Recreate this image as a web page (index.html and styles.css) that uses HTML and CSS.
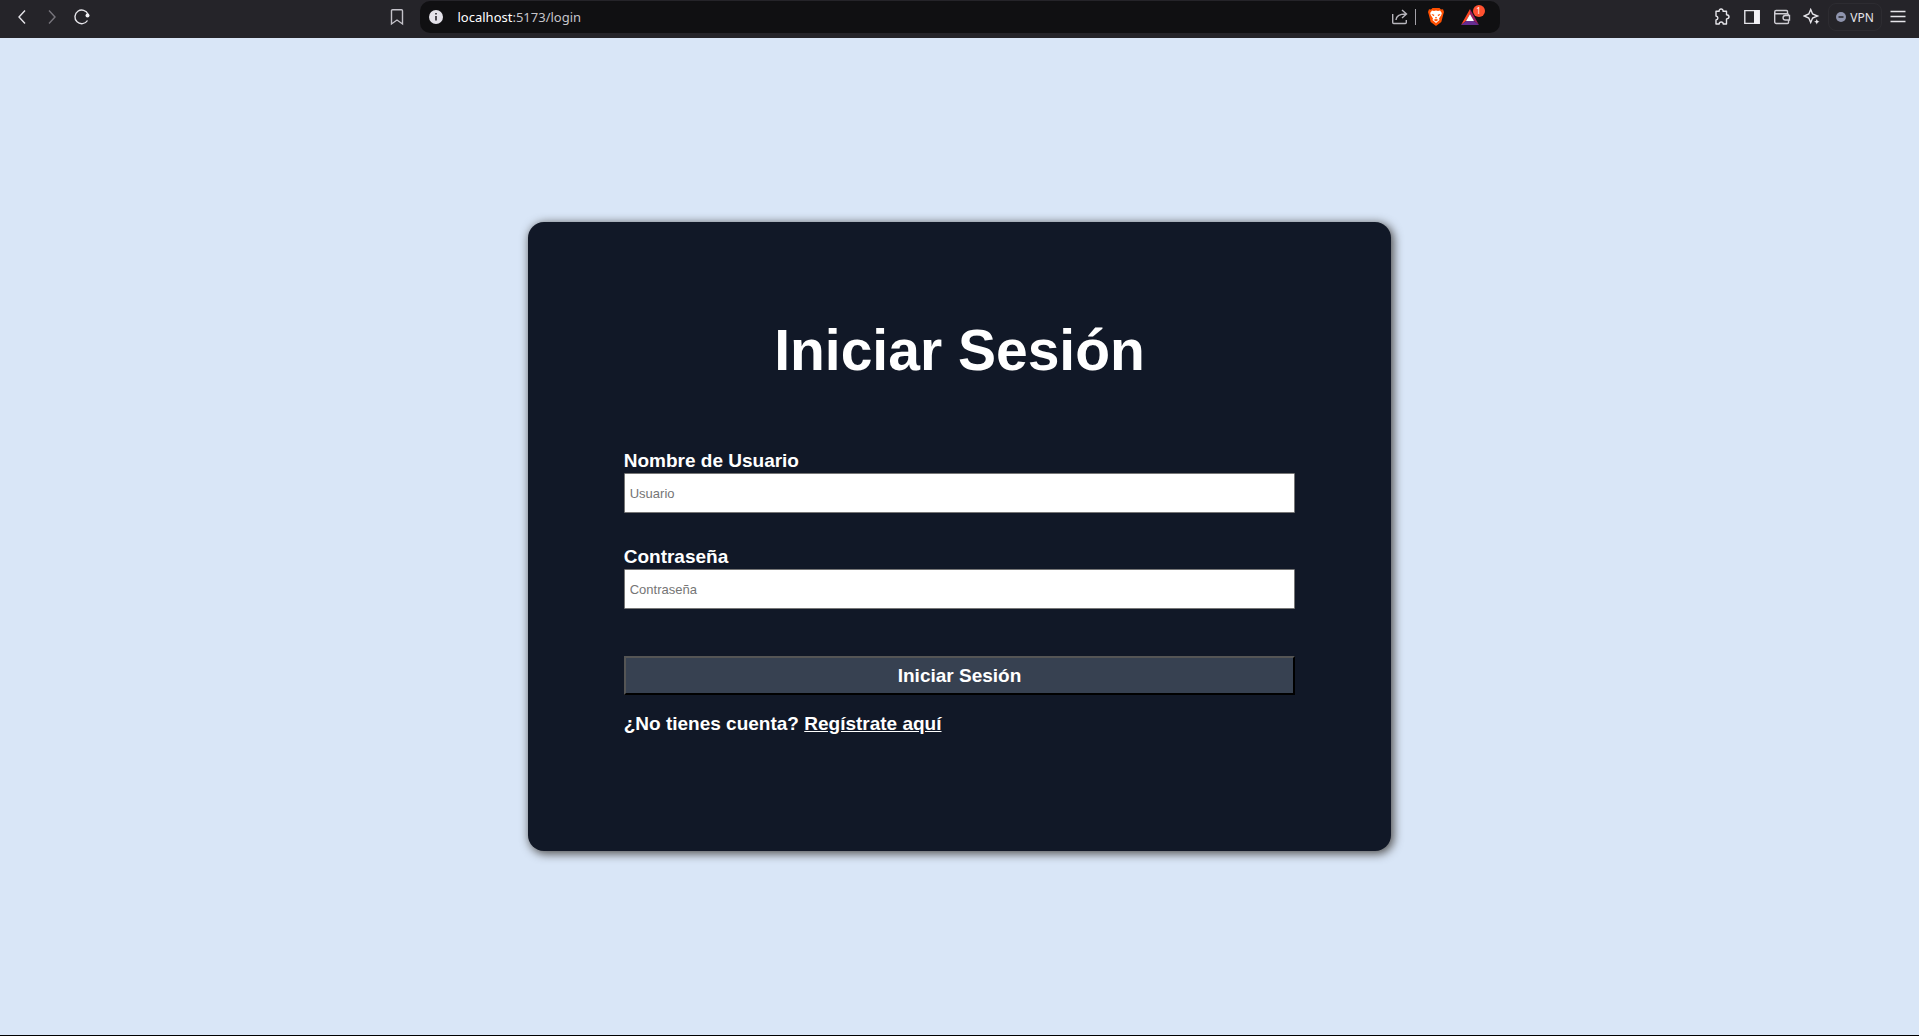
FILE: index.html
```html
<!DOCTYPE html>
<html lang="es">
<head>
<meta charset="utf-8">
<meta name="viewport" content="width=device-width, initial-scale=1">
<title>Iniciar Sesión</title>
<link rel="stylesheet" href="styles.css">
</head>
<body>
<header class="toolbar">
  <nav class="toolbar-side toolbar-left" aria-label="Navegación">
    <button class="icon-button" type="button" aria-label="Atrás"><svg width="16" height="16" viewBox="0 0 16 16"><path d="M11 1.500 5 8l6 6.500"/></svg></button>
    <button class="icon-button dim" type="button" aria-label="Adelante"><svg width="16" height="16" viewBox="0 0 16 16"><path d="M5 1.500l6 6.500-6 6.500"/></svg></button>
    <button class="icon-button" type="button" aria-label="Recargar"><svg width="18" height="18" viewBox="0 0 18 18"><path d="M14.500 12.500A6.800 6.800 0 1 1 15 6.200"/><circle class="solid" cx="14.500" cy="7.500" r="2"/></svg></button>
    <button class="icon-button bookmark" type="button" aria-label="Marcador"><svg width="16" height="18" viewBox="0 0 16 18"><path d="M3.500 1.700h9a1 1 0 0 1 1 1V16L8 12 2.500 16V2.700a1 1 0 0 1 1-1z"/></svg></button>
  </nav>
  <div class="address-bar">
    <button class="plain" type="button" aria-label="Información del sitio"><svg width="16" height="16" viewBox="0 0 16 16"><circle cx="8" cy="8" r="7" fill="#e4e2e9"/><path d="M8 7v4.500M8 4v1.600" fill="none" stroke="#3a383f" stroke-width="1.800"/></svg></button>
    <div class="address" role="textbox" contenteditable="true" spellcheck="false" aria-label="Dirección"><span class="host">localhost</span>:5173/login</div>
    <button class="icon-button" type="button" aria-label="Compartir"><svg class="muted" width="18" height="18" viewBox="0 0 18 18"><path d="M1.700 6v8.500a1 1 0 0 0 1 1h11.600a1 1 0 0 0 1-1V12M5 12c.3-4 3.200-6 9.500-6M11 2l4.500 4-4.500 4"/></svg></button>
    <span class="divider"></span>
    <button class="icon-button shield" type="button" aria-label="Escudos"><svg width="18" height="20" viewBox="0 0 18 20"><path d="M5.500 1h7l1.500 1.500 2-.2L17 5l-.6 2L14.300 15 9 19 3.700 15 1.600 7 1 5l1-2.700 2 .2z" fill="#ff5000"/><path d="M5 3.500l2 .4 2-.4 2 .4 2-.4 1.800 2.500-.5 2-2.300 3.500.5 1.500L9 16l-3.500-3 .5-1.500L3.700 8l-.5-2z" fill="#fff"/><path d="M4.600 7l2.700.8-.3 1.400L5 8zM13.400 7l-2.700.8.3 1.400L13 8zM8 10h2l-1 2zM6.500 12.800 9 12l2.500.8L9 14.400z" fill="#ff5000"/></svg></button>
    <button class="icon-button rewards" type="button" aria-label="Recompensas"><svg width="18" height="16" viewBox="0 0 18 16"><path d="M9 0 0 16l5-4L9 5z" fill="#ff4724"/><path d="M9 0l9 16-5-4L9 5z" fill="#9e1f63"/><path d="M0 16h18l-5-4H5z" fill="#662d91"/><path d="M9 5l4 7H5z" fill="#fff"/></svg><span class="badge">1</span></button>
  </div>
  <div class="toolbar-side toolbar-right">
    <button class="icon-button" type="button" aria-label="Extensiones"><svg width="18" height="18" viewBox="0 0 18 18"><path d="M3 3.200h3.200c-.3-1.300.6-2.200 1.900-2.200s2.200.9 1.900 2.200h3.500v3.500c1.500.1 2.500.9 2.500 2.100s-1 2-2.500 2.100V16h-3.300c0-1.300-.8-2-2-2s-2 .7-2 2H3v-4c1.200-.2 1.900-.9 1.900-2S4.200 8.200 3 8z" stroke-linejoin="round"/></svg></button>
    <button class="icon-button" type="button" aria-label="Panel lateral"><svg width="18" height="18" viewBox="0 0 18 18"><path d="M1.800 2.600h14.400v12.800H1.800z"/><path class="solid" d="M11 2h5.700v14H11z"/></svg></button>
    <button class="icon-button wallet" type="button" aria-label="Cartera"><svg width="18" height="18" viewBox="0 0 18 18"><path d="M14.500 5.500V3.500a1 1 0 0 0-1-1H3.200a1.500 1.500 0 0 0-1.500 1.500v10a1.500 1.500 0 0 0 1.500 1.500h11.300a1 1 0 0 0 1-1V12M1.700 4.200a1.500 1.500 0 0 0 1.500 1.500h11.300a1 1 0 0 1 1 1M16.500 7.500h-4.200a2.200 2.200 0 0 0 0 4.500h4.200z"/></svg></button>
    <button class="icon-button" type="button" aria-label="Asistente"><svg width="18" height="18" viewBox="0 0 18 18"><path d="M7.700 1.500 9.600 6l4.900 2-4.900 2-1.900 4.500L5.800 10 1 8l4.800-2z"/><path class="solid" d="M13.800 11l.8 1.900 1.900.8-1.900.8-.8 1.900-.8-1.900-1.900-.8 1.900-.8z"/></svg></button>
    <button class="vpn" type="button"><svg width="10" height="10" viewBox="0 0 10 10"><circle cx="5" cy="5" r="5" fill="#8f94ad"/><path d="M2.500 5h5" stroke="#252429" stroke-width="1.500"/></svg>VPN</button>
    <button class="icon-button" type="button" aria-label="Menú"><svg width="16" height="16" viewBox="0 0 16 16"><path d="M.5 2.500h15M.5 7.500h15M.5 12.500h15"/></svg></button>
  </div>
</header>
<main class="page">
  <form class="card">
    <h1 class="title">Iniciar Sesión</h1>
    <div class="field">
      <label for="user">Nombre de Usuario</label>
      <input id="user" type="text" placeholder="Usuario">
    </div>
    <div class="field">
      <label for="password">Contraseña</label>
      <input id="password" type="password" placeholder="Contraseña">
    </div>
    <button class="submit" type="submit">Iniciar Sesión</button>
    <p class="signup">¿No tienes cuenta? <a href="#registro">Regístrate aquí</a></p>
  </form>
</main>
</body>
</html>
```
FILE: styles.css
```css
* {
  box-sizing: border-box;
}

body {
  margin: 0;
  min-height: 100vh;
  display: flex;
  flex-direction: column;
  background: #d9e6f7;
  border-bottom: 1px solid #000;
  font-family: "Liberation Sans", Arial, sans-serif;
}

button {
  font: inherit;
  cursor: pointer;
}

/* Browser toolbar */
.toolbar {
  display: grid;
  grid-template-columns: 1fr minmax(0, 1080px) 1fr;
  height: 38px;
  padding: 1px 0 5px;
  background: #252429;
  font-family: "Noto Sans", sans-serif;
}

.toolbar-side {
  display: flex;
  align-items: center;
}

.toolbar-left {
  padding: 0 8px 0 7px;
}

.toolbar-right {
  justify-content: flex-end;
  padding-right: 6px;
}

.icon-button,
.plain {
  display: flex;
  align-items: center;
  justify-content: center;
  flex: none;
  padding: 0;
  border: 0;
  background: none;
}

.icon-button {
  width: 30px;
  height: 30px;
}

.icon-button svg {
  fill: none;
  stroke: #e6e5ea;
  stroke-width: 1.4;
}

.icon-button .solid {
  fill: #f2f1f5;
  stroke: none;
}

.dim svg {
  stroke: #77757c;
}

.icon-button .muted {
  stroke: #b8b6bd;
}

.wallet svg {
  stroke: #cfcdd4;
}

.bookmark {
  margin-left: auto;
}

.bookmark svg {
  stroke: #c4c2c9;
}

.address-bar {
  display: flex;
  align-items: center;
  padding: 0 15px 0 8px;
  border-radius: 10px;
  background: #101012;
}

.address {
  flex: 1;
  padding-left: 14px;
  color: #c6c5ca;
  font-size: 13px;
  line-height: 20px;
  outline: none;
}

.host {
  color: #fff;
}

.divider {
  width: 1px;
  height: 16px;
  background: #a3a1a8;
}

.icon-button.shield svg,
.icon-button.rewards svg {
  stroke: none;
}

.shield {
  margin-left: 5px;
}

.rewards {
  position: relative;
  margin-left: 4px;
}

.badge {
  position: absolute;
  top: 3px;
  right: 0;
  width: 12px;
  height: 12px;
  border-radius: 50%;
  background: #ff5130;
  color: #fff;
  font-size: 8px;
  line-height: 12px;
}

.vpn {
  display: flex;
  align-items: center;
  justify-content: center;
  gap: 4px;
  height: 28px;
  width: 54px;
  margin: 0 1px;
  padding: 0;
  border: 1px solid #2d2c31;
  border-radius: 8px;
  background: none;
  color: #e6e5ea;
  font-size: 12px;
}

/* Login page */
.page {
  flex: 1;
  display: flex;
  align-items: center;
  justify-content: center;
}

.card {
  display: flex;
  flex-direction: column;
  width: 45%;
  padding: 96px;
  border-radius: 16px;
  background: #111827;
  box-shadow: 2px 2px 10px 1px #555;
  color: #fff;
  font-size: 19px;
  font-weight: bold;
  line-height: 20px;
}

.title {
  margin: 0 0 68px;
  font-size: 57px;
  line-height: 65px;
  text-align: center;
}

.field {
  display: flex;
  flex-direction: column;
  gap: 2px;
  margin-bottom: 34px;
}

.field input {
  height: 40px;
  padding: 0 5px;
  border: 1px solid #767676;
  border-radius: 1px;
  background: #fff;
  font-family: inherit;
  font-size: 13px;
}

.field input::placeholder {
  color: #757575;
}

.submit {
  height: 39px;
  margin-top: 13px;
  padding: 0;
  border: 2px solid;
  border-color: #555 #000 #000 #555;
  background: #374151;
  color: #fff;
}

.signup {
  margin: 19px 0 21px;
}

.signup a {
  color: inherit;
}
```
